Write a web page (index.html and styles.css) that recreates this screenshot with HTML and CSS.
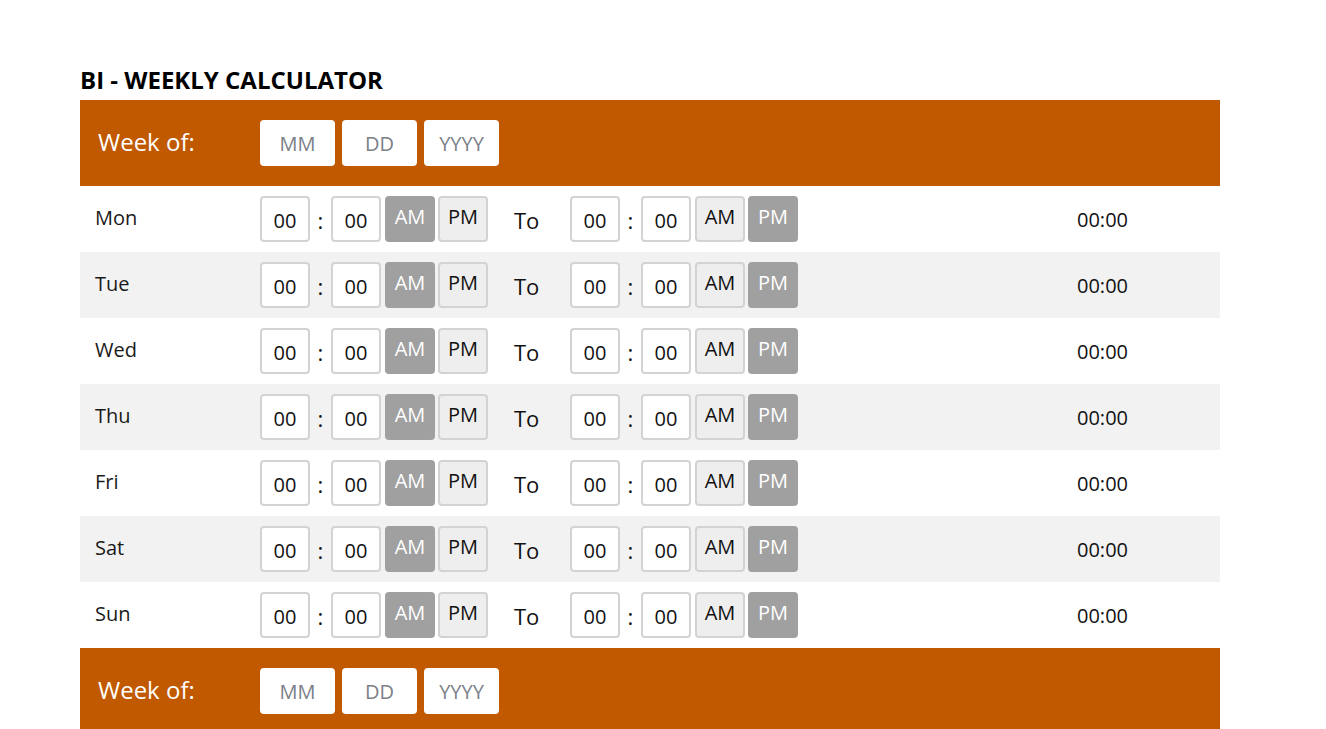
FILE: index.html
```html
<!DOCTYPE html>
<html>
<head>
<meta charset="utf-8">
<link rel="stylesheet" href="styles.css">
</head>
<body>
<div class="calc">
  <h1 class="title">BI - WEEKLY CALCULATOR</h1>
  <div class="band">
    <div class="band-label">Week of:</div>
    <div class="date-fields">
      <input class="date" placeholder="MM">
      <input class="date" placeholder="DD">
      <input class="date" placeholder="YYYY">
    </div>
  </div>
  <div class="rows">
    <div class="row"><div class="day">Mon</div><div class="times"><input class="t" value="00"><span class="colon">:</span><input class="t" value="00"><span class="btn on">AM</span><span class="btn">PM</span><span class="to">To</span><input class="t" value="00"><span class="colon">:</span><input class="t" value="00"><span class="btn">AM</span><span class="btn on">PM</span></div><div class="total">00:00</div></div>
    <div class="row alt"><div class="day">Tue</div><div class="times"><input class="t" value="00"><span class="colon">:</span><input class="t" value="00"><span class="btn on">AM</span><span class="btn">PM</span><span class="to">To</span><input class="t" value="00"><span class="colon">:</span><input class="t" value="00"><span class="btn">AM</span><span class="btn on">PM</span></div><div class="total">00:00</div></div>
    <div class="row"><div class="day">Wed</div><div class="times"><input class="t" value="00"><span class="colon">:</span><input class="t" value="00"><span class="btn on">AM</span><span class="btn">PM</span><span class="to">To</span><input class="t" value="00"><span class="colon">:</span><input class="t" value="00"><span class="btn">AM</span><span class="btn on">PM</span></div><div class="total">00:00</div></div>
    <div class="row alt"><div class="day">Thu</div><div class="times"><input class="t" value="00"><span class="colon">:</span><input class="t" value="00"><span class="btn on">AM</span><span class="btn">PM</span><span class="to">To</span><input class="t" value="00"><span class="colon">:</span><input class="t" value="00"><span class="btn">AM</span><span class="btn on">PM</span></div><div class="total">00:00</div></div>
    <div class="row"><div class="day">Fri</div><div class="times"><input class="t" value="00"><span class="colon">:</span><input class="t" value="00"><span class="btn on">AM</span><span class="btn">PM</span><span class="to">To</span><input class="t" value="00"><span class="colon">:</span><input class="t" value="00"><span class="btn">AM</span><span class="btn on">PM</span></div><div class="total">00:00</div></div>
    <div class="row alt"><div class="day">Sat</div><div class="times"><input class="t" value="00"><span class="colon">:</span><input class="t" value="00"><span class="btn on">AM</span><span class="btn">PM</span><span class="to">To</span><input class="t" value="00"><span class="colon">:</span><input class="t" value="00"><span class="btn">AM</span><span class="btn on">PM</span></div><div class="total">00:00</div></div>
    <div class="row"><div class="day">Sun</div><div class="times"><input class="t" value="00"><span class="colon">:</span><input class="t" value="00"><span class="btn on">AM</span><span class="btn">PM</span><span class="to">To</span><input class="t" value="00"><span class="colon">:</span><input class="t" value="00"><span class="btn">AM</span><span class="btn on">PM</span></div><div class="total">00:00</div></div>
  </div>
  <div class="band">
    <div class="band-label">Week of:</div>
    <div class="date-fields">
      <input class="date" placeholder="MM">
      <input class="date" placeholder="DD">
      <input class="date" placeholder="YYYY">
    </div>
  </div>
</div>
</body>
</html>
```
FILE: styles.css
```css
* { box-sizing: border-box; }
body {
  margin: 0;
  background: #ffffff;
  font-family: "Open Sans", "Liberation Sans", sans-serif;
  color: #111;
}
.calc {
  width: 1140px;
  margin-left: 80px;
  padding-top: 63px;
}
.title {
  margin: 0 0 4px 0;
  font-size: 24px;
  line-height: 33px;
  font-weight: 700;
  color: #000;
}
.band {
  display: flex;
  align-items: center;
  height: 86px;
  background: #c05900;
}
.band-label {
  width: 180px;
  padding-left: 18px;
  font-size: 24px;
  color: #fff;
  margin-top: -3px;
}
.date-fields {
  display: flex;
  gap: 7px;
}
.date {
  width: 75px;
  height: 46px;
  border: none;
  border-radius: 4px;
  background: #fff;
  text-align: center;
  font-family: inherit;
  font-size: 20px;
  padding: 0;
  outline: none;
}
.date::placeholder { color: #7b8088; }
.row {
  display: flex;
  align-items: center;
  height: 66px;
  background: #fff;
}
.row.alt { background: #f2f2f2; }
.day {
  width: 180px;
  padding-left: 15px;
  font-size: 20px;
  color: #1a1a1a;
  margin-top: -4px;
}
.times {
  display: flex;
  align-items: center;
  width: 817px;
}
.t {
  width: 50px;
  height: 46px;
  border: 2px solid #d3d3d3;
  border-radius: 4px;
  background: #fff;
  text-align: center;
  font-family: inherit;
  font-size: 20px;
  color: #111;
  padding: 2px 0 0 0;
  outline: none;
}
.colon {
  width: 21px;
  text-align: center;
  font-size: 22px;
  margin-top: 2px;
}
.btn {
  display: flex;
  align-items: center;
  justify-content: center;
  width: 50px;
  height: 46px;
  margin-left: 4px;
  border: 2px solid #d3d3d3;
  border-radius: 4px;
  background: #eeeeee;
  font-size: 20px;
  color: #111;
  padding-bottom: 5px;
}
.btn + .btn { margin-left: 3px; }
.btn.on {
  background: #a0a0a0;
  border-color: #a0a0a0;
  color: #fff;
}
.to {
  width: 82px;
  padding-left: 26px;
  font-size: 22px;
  margin-top: 2px;
}
.total {
  font-size: 20px;
}
```
